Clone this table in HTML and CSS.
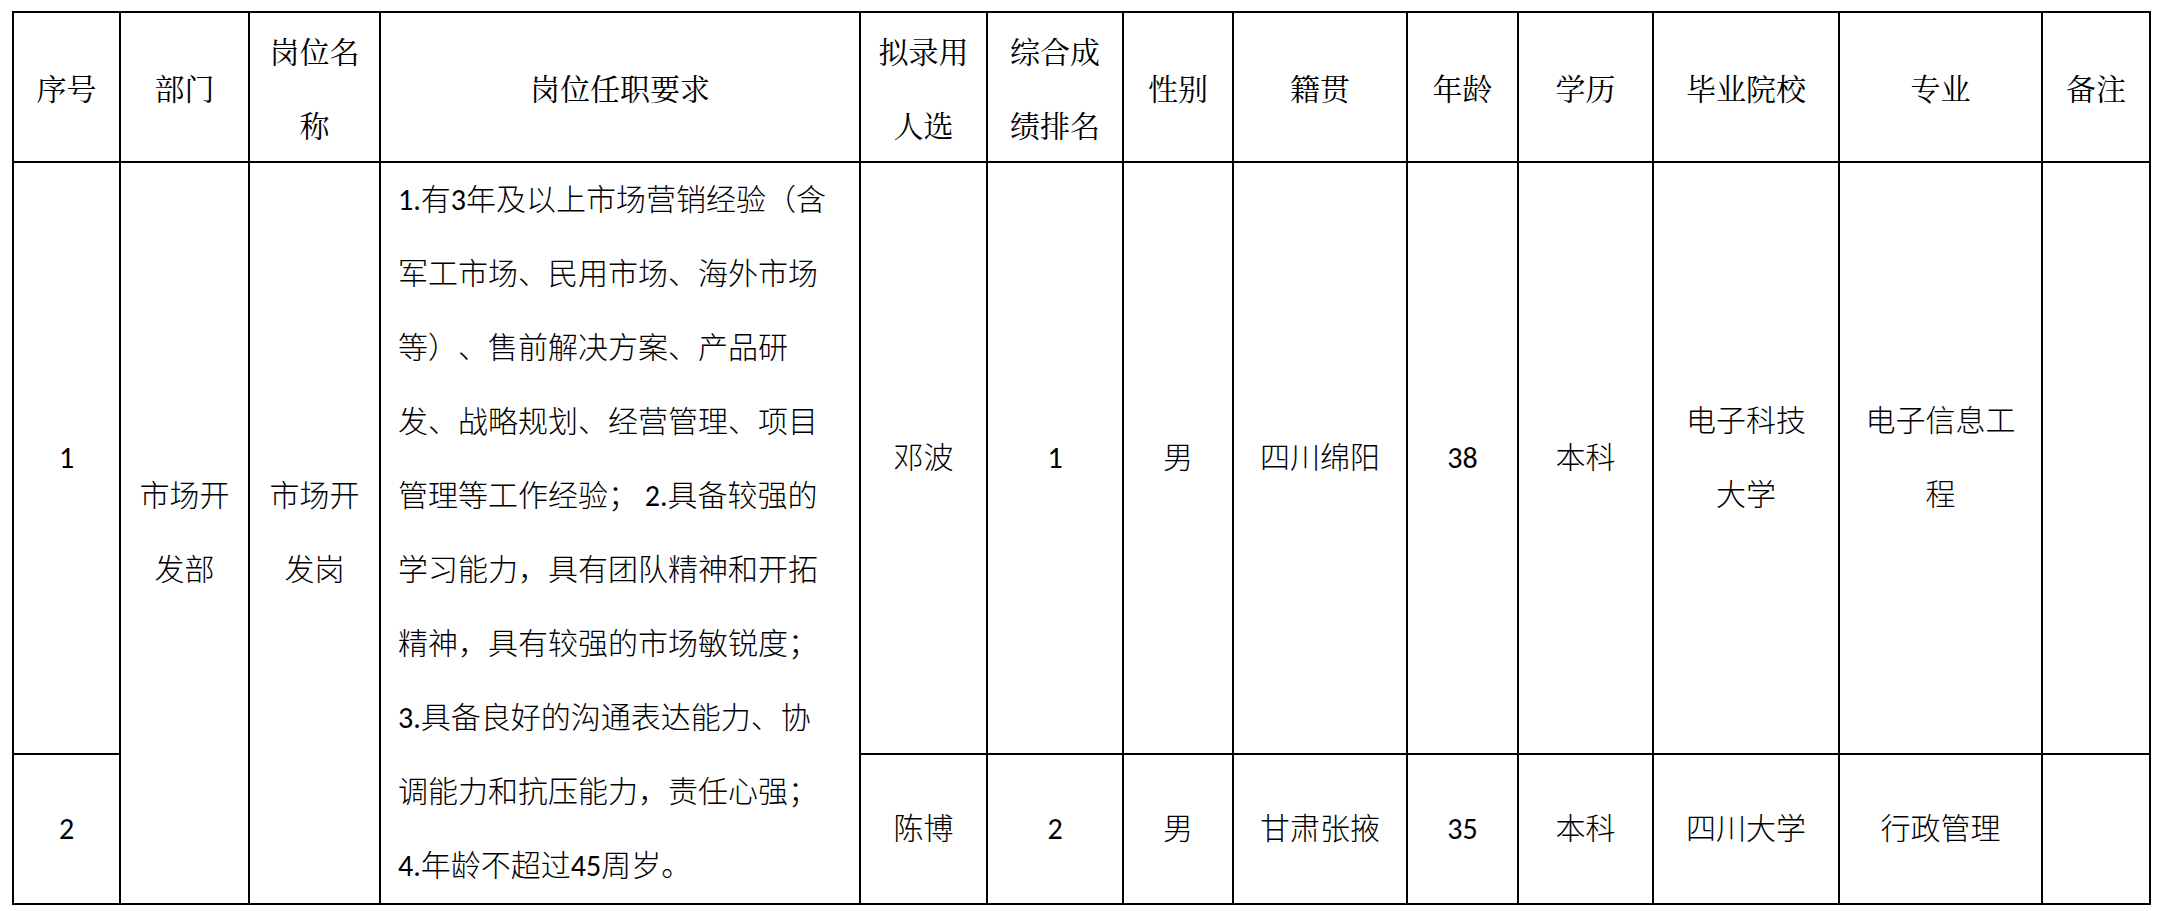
FILE: index.html
```html
<!DOCTYPE html>
<html lang="zh-CN">
<head>
<meta charset="utf-8">
<title>拟录用人选公示</title>
<link rel="stylesheet" href="styles.css">
</head>
<body>
<table class="roster">
  <colgroup>
    <col class="c-no">
    <col class="c-dept">
    <col class="c-post">
    <col class="c-req">
    <col class="c-name">
    <col class="c-rank">
    <col class="c-sex">
    <col class="c-origin">
    <col class="c-age">
    <col class="c-edu">
    <col class="c-school">
    <col class="c-major">
    <col class="c-note">
  </colgroup>
  <thead>
    <tr class="head-row">
      <th>序号</th>
      <th>部门</th>
      <th>岗位名<br>称</th>
      <th>岗位任职要求</th>
      <th>拟录用<br>人选</th>
      <th>综合成<br>绩排名</th>
      <th>性别</th>
      <th>籍贯</th>
      <th>年龄</th>
      <th>学历</th>
      <th>毕业院校</th>
      <th>专业</th>
      <th>备注</th>
    </tr>
  </thead>
  <tbody>
    <tr class="row-one">
      <td class="num">1</td>
      <td rowspan="2">市场开<br>发部</td>
      <td rowspan="2">市场开<br>发岗</td>
      <td rowspan="2" class="req"><span class="n">1.</span>有<span class="n">3</span>年及以上市场营销经验（含<br>军工市场、民用市场、海外市场<br>等）、售前解决方案、产品研<br>发、战略规划、经营管理、项目<br>管理等工作经验； <span class="n">2.</span>具备较强的<br>学习能力，具有团队精神和开拓<br>精神，具有较强的市场敏锐度；<br><span class="n">3.</span>具备良好的沟通表达能力、协<br>调能力和抗压能力，责任心强；<br><span class="n">4.</span>年龄不超过<span class="n">45</span>周岁。</td>
      <td>邓波</td>
      <td class="num">1</td>
      <td>男</td>
      <td>四川绵阳</td>
      <td class="num">38</td>
      <td>本科</td>
      <td>电子科技<br>大学</td>
      <td>电子信息工<br>程</td>
      <td></td>
    </tr>
    <tr class="row-two">
      <td class="num">2</td>
      <td>陈博</td>
      <td class="num">2</td>
      <td>男</td>
      <td>甘肃张掖</td>
      <td class="num">35</td>
      <td>本科</td>
      <td>四川大学</td>
      <td>行政管理</td>
      <td></td>
    </tr>
  </tbody>
</table>
</body>
</html>
```

FILE: styles.css
```css
html, body {
  margin: 0;
  padding: 0;
  background: #ffffff;
}

body {
  padding: 11px 0 0 12px;
  color: #000000;
  font-family: "Carlito", "Lato", "Noto Sans CJK SC", sans-serif;
  font-size: 30px;
  font-weight: 300;
  text-spacing-trim: space-all;
}

.roster {
  border-collapse: collapse;
  table-layout: fixed;
  width: 2137px;
}

.roster th,
.roster td {
  border: 2px solid #000000;
  padding: 0;
  text-align: center;
  vertical-align: middle;
  line-height: 74px;
  white-space: nowrap;
  overflow: hidden;
}

.roster th {
  font-family: "Noto Serif CJK SC", "Noto Sans CJK SC", serif;
  font-weight: 400;
}

.roster td.num,
.roster .n {
  font-weight: 400;
}

.head-row { height: 150px; }
.row-one { height: 591px; }
.row-two { height: 150px; }

.roster td.req {
  text-align: left;
  padding-left: 17px;
}

.c-no { width: 107px; }
.c-dept { width: 129px; }
.c-post { width: 131px; }
.c-req { width: 480px; }
.c-name { width: 127px; }
.c-rank { width: 136px; }
.c-sex { width: 110px; }
.c-origin { width: 174px; }
.c-age { width: 111px; }
.c-edu { width: 135px; }
.c-school { width: 186px; }
.c-major { width: 203px; }
.c-note { width: 108px; }
```
